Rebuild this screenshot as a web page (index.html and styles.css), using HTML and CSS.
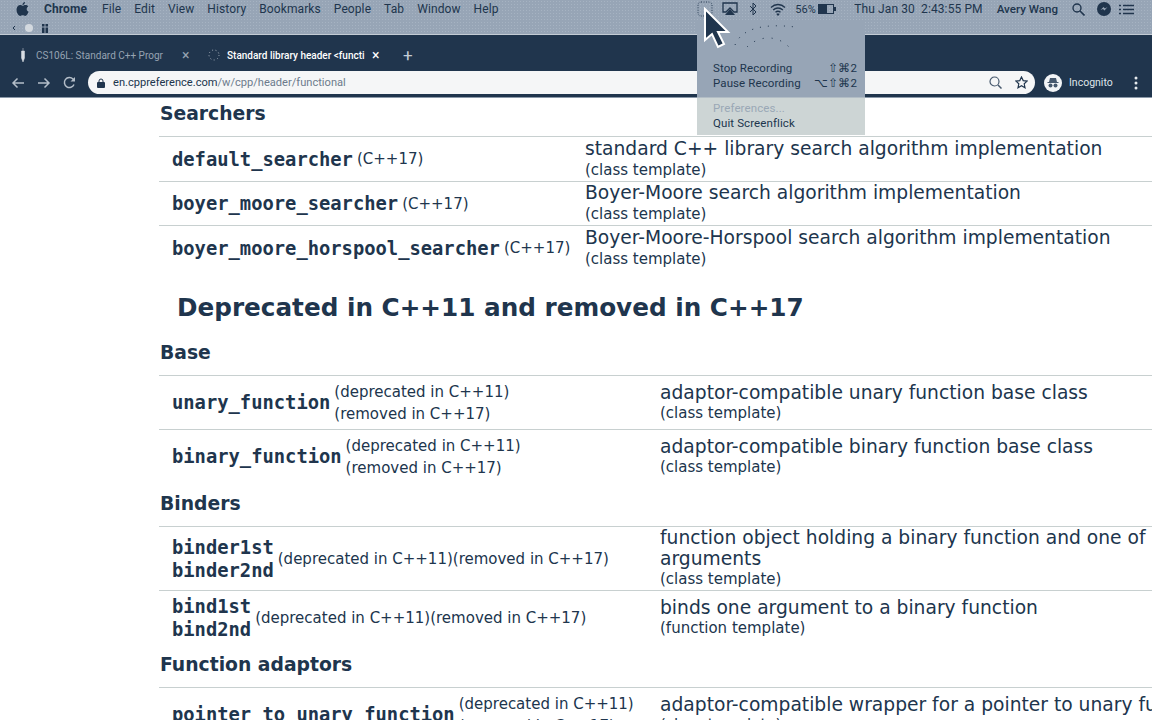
FILE: index.html

```html
<!DOCTYPE html>
<html lang="en">
<head>
    <meta charset="UTF-8" />
    <title>Standard library header &lt;functional&gt;</title>
    <link rel="stylesheet" href="styles.css">
</head>
<body>

<div class="menubar">
  <div class="menu-row">
    <div class="menu-left">
      <svg class="apple" width="13" height="14" viewBox="0 0 13 14"><path d="M9 0c.1 1.400-1 2.900-2.600 2.900C6.300 1.500 7.600.2 9 0zM6.500 3.800c.7 0 1.600-.8 3-.8 1 0 2.100.5 2.700 1.400-2.200 1.400-1.900 4.300.4 5.300-.6 1.600-2 4.200-3.400 4.200-.9 0-1.400-.6-2.500-.6s-1.700.6-2.500.6C2.500 13.900.5 10.600.5 7.800.5 4.800 2.400 3.100 4.200 3.100c1 0 1.700.7 2.300.7z" fill="#20354d"/></svg>
      <span class="app-name">Chrome</span>
      <span>File</span>
      <span>Edit</span>
      <span>View</span>
      <span>History</span>
      <span>Bookmarks</span>
      <span>People</span>
      <span>Tab</span>
      <span>Window</span>
      <span>Help</span>
    </div>
    <div class="menu-right">
      <svg class="status-icon rec" width="16" height="16" viewBox="0 0 16 16"><rect x="1" y="1" width="14" height="14" rx="3" fill="none" stroke="#20354d" stroke-dasharray="1 1.500"/></svg>
      <svg class="status-icon airplay" width="16" height="14" viewBox="0 0 16 14"><path d="M1 1h14v9h-3L8 6l-4 4H1z" fill="none" stroke="#20354d" stroke-width="1.300"/><path d="M8 7l5 6H3z" fill="#20354d"/></svg>
      <svg class="status-icon bt" width="8" height="14" viewBox="0 0 8 14"><path d="M1 4l6 6-3 3V1l3 3-6 6" fill="none" stroke="#20354d"/></svg>
      <svg class="status-icon wifi" width="16" height="13" viewBox="0 0 16 13"><path d="M1 4.500c4-4 10-4 14 0M3.200 7c2.800-2.700 6.800-2.700 9.600 0M5.500 9.300c1.500-1.300 3.500-1.300 5 0" fill="none" stroke="#20354d" stroke-width="1.300"/><path d="M8 13l-1.700-2c1-.6 2.400-.6 3.400 0z" fill="#20354d"/></svg>
      <span class="batt-text">56%</span>
      <svg class="status-icon batt" width="18" height="10" viewBox="0 0 18 10"><rect x=".5" y=".5" width="15" height="9" fill="none" stroke="#20354d"/><rect x="1" y="1" width="8" height="8" fill="#20354d"/><rect x="16" y="3" width="2" height="4" fill="#20354d"/></svg>
      <span class="clock">Thu Jan 30&nbsp; 2:43:55 PM</span>
      <span class="user">Avery Wang</span>
      <svg class="status-icon search" width="13" height="13" viewBox="0 0 13 13"><circle cx="5" cy="5" r="4" fill="none" stroke="#20354d" stroke-width="1.400"/><path d="M8 8l4.500 4.500" stroke="#20354d" stroke-width="1.600"/></svg>
      <svg class="status-icon msg" width="14" height="14" viewBox="0 0 14 14"><circle cx="7" cy="7" r="7" fill="#20354d"/><path d="M3.500 8l3-3 1.500 1.500L10.500 5l-3 3.500L6 7z" fill="#97a5b6"/></svg>
      <svg class="status-icon list" width="15" height="11" viewBox="0 0 15 11"><path d="M4 1.500h11M4 5.500h11M4 9.500h11" stroke="#20354d" stroke-width="1.600"/><path d="M0 1.500h2M0 5.500h2M0 9.500h2" stroke="#20354d" stroke-width="1.600"/></svg>
    </div>
  </div>
  <div class="extras-row">
    <svg width="40" height="12" viewBox="0 0 40 12"><path d="M1 6l2-2M1 6l2 2" stroke="#20354d"/><circle cx="17" cy="6" r="4" fill="#d3d9df"/><rect x="30" y="2" width="6" height="9" fill="#20354d"/><path d="M30 5h6M33 2v9" stroke="#97a5b6"/></svg>
  </div>
</div>

<div class="tabbar">
  <div class="tab">
    <svg width="6" height="14" viewBox="0 0 6 14"><path d="M3 0v3M1.500 3h3v7L3 14l-1.500-4z" fill="#d8dde3" stroke="#d8dde3" stroke-width=".5"/></svg>
    <span class="tab-title">CS106L: Standard C++ Progr</span>
    <span class="tab-close">×</span>
  </div>
  <div class="tab tab-active">
    <svg width="12" height="14" viewBox="0 0 12 14"><circle cx="6" cy="7" r="5" fill="none" stroke="#aab4c0" stroke-dasharray="1 2.500"/></svg>
    <span class="tab-title">Standard library header &lt;functi</span>
    <span class="tab-close">×</span>
  </div>
  <span class="tab-new">+</span>
</div>

<div class="toolbar">
  <svg class="nav-btn" width="14" height="12" viewBox="0 0 14 12"><path d="M13 6H2M6.500 1.500L2 6l4.500 4.500" fill="none" stroke="#b4bec9" stroke-width="1.500"/></svg>
  <svg class="nav-btn" width="14" height="12" viewBox="0 0 14 12"><path d="M1 6h11M7.500 1.500L12 6l-4.500 4.500" fill="none" stroke="#b4bec9" stroke-width="1.500"/></svg>
  <svg class="nav-btn" width="13" height="13" viewBox="0 0 13 13"><path d="M11 8.500A5 5 0 1 1 10 3l1.500 1.500" fill="none" stroke="#b4bec9" stroke-width="1.500"/><path d="M12 1v4.500H7.500z" fill="#b4bec9"/></svg>
  <div class="omnibox">
    <svg width="8" height="10" viewBox="0 0 8 10"><rect y="4" width="8" height="6" rx="1" fill="#20354d"/><path d="M2 4.500V3a2 2 0 0 1 4 0v1.500" fill="none" stroke="#20354d"/></svg>
    <span class="url"><b>en.cppreference.com</b>/w/cpp/header/functional</span>
    <svg class="omni-zoom" width="13" height="13" viewBox="0 0 13 13"><circle cx="5.500" cy="5.500" r="4.500" fill="none" stroke="#46586d" stroke-width="1.200"/><path d="M9 9l3.500 3.500" stroke="#46586d" stroke-width="1.500"/></svg>
    <svg class="omni-star" width="13" height="13" viewBox="0 0 13 13"><path d="M6.500 1l1.700 3.600 3.900.5-2.900 2.700.8 3.900-3.500-2-3.500 2 .8-3.900L.9 5.100l3.900-.5z" fill="none" stroke="#20354d" stroke-width="1.200"/></svg>
  </div>
  <svg class="avatar" width="18" height="18" viewBox="0 0 18 18"><circle cx="9" cy="9" r="9" fill="#f2f4f6"/><path d="M5 8l1-4h6l1 4z" fill="#46586d"/><path d="M3.500 8.500h11" stroke="#46586d"/><circle cx="6.500" cy="11.500" r="2" fill="#46586d"/><circle cx="11.500" cy="11.500" r="2" fill="#46586d"/></svg>
  <span class="profile">Incognito</span>
  <svg class="dots" width="4" height="14" viewBox="0 0 4 14"><circle cx="2" cy="2" r="1.500" fill="#e6eaee"/><circle cx="2" cy="7" r="1.500" fill="#e6eaee"/><circle cx="2" cy="12" r="1.500" fill="#e6eaee"/></svg>
</div>

<div class="content">
  <h3>Searchers</h3>
  <div class="dsc-table table-narrow">
    <div class="dsc-row row-45">
      <div class="dsc-name"><code>default_searcher</code><small>(C++17)</small></div>
      <div class="dsc-text">standard C++ library search algorithm implementation<small>(class template)</small></div>
    </div>
    <div class="dsc-row row-44">
      <div class="dsc-name"><code>boyer_moore_searcher</code><small>(C++17)</small></div>
      <div class="dsc-text">Boyer-Moore search algorithm implementation<small>(class template)</small></div>
    </div>
    <div class="dsc-row row-45">
      <div class="dsc-name"><code>boyer_moore_horspool_searcher</code><small>(C++17)</small></div>
      <div class="dsc-text">Boyer-Moore-Horspool search algorithm implementation<small>(class template)</small></div>
    </div>
  </div>

  <h2>Deprecated in C++11 and removed in C++17</h2>

  <h3>Base</h3>
  <div class="dsc-table">
    <div class="dsc-row row-54">
      <div class="dsc-name"><code>unary_function</code><small class="two-line">(deprecated in C++11)<br>(removed in C++17)</small></div>
      <div class="dsc-text">adaptor-compatible unary function base class<small>(class template)</small></div>
    </div>
    <div class="dsc-row row-54">
      <div class="dsc-name"><code>binary_function</code><small class="two-line">(deprecated in C++11)<br>(removed in C++17)</small></div>
      <div class="dsc-text">adaptor-compatible binary function base class<small>(class template)</small></div>
    </div>
  </div>

  <h3>Binders</h3>
  <div class="dsc-table">
    <div class="dsc-row row-64">
      <div class="dsc-name"><code class="stack">binder1st<br>binder2nd</code><small>(deprecated in C++11)(removed in C++17)</small></div>
      <div class="dsc-text">function object holding a binary function and one of<br>arguments<small>(class template)</small></div>
    </div>
    <div class="dsc-row row-54">
      <div class="dsc-name"><code class="stack">bind1st<br>bind2nd</code><small>(deprecated in C++11)(removed in C++17)</small></div>
      <div class="dsc-text">binds one argument to a binary function<small>(function template)</small></div>
    </div>
  </div>

  <h3>Function adaptors</h3>
  <div class="dsc-table">
    <div class="dsc-row row-54">
      <div class="dsc-name"><code>pointer_to_unary_function</code><small class="two-line">(deprecated in C++11)<br>(removed in C++17)</small></div>
      <div class="dsc-text">adaptor-compatible wrapper for a pointer to unary function<small>(class template)</small></div>
    </div>
  </div>
</div>

<!-- screenflick dropdown, sits over the browser -->
<div class="status-menu">
  <svg class="menu-spinner" width="70" height="28" viewBox="0 0 70 28">
    <path d="M2 22C8 6 30 0 62 4" fill="none" stroke="#20354d" stroke-dasharray="1 7"/>
    <path d="M14 24C24 14 42 10 56 24" fill="none" stroke="#20354d" stroke-dasharray="1 8"/>
  </svg>
  <div class="menu-item"><span>Stop Recording</span><span>⇧⌘2</span></div>
  <div class="menu-item"><span>Pause Recording</span><span>⌥⇧⌘2</span></div>
  <div class="menu-sep"></div>
  <div class="menu-item menu-dim"><span>Preferences...</span></div>
  <div class="menu-item"><span>Quit Screenflick</span></div>
</div>

<svg class="cursor" width="28" height="42" viewBox="0 0 28 42"><path d="M2 2v31l7-6 6 13 6-3-6-12h10z" fill="#20354d" stroke="#fff" stroke-width="2"/></svg>

</body>
</html>
```

FILE: styles.css

```css
html, body {
  margin: 0;
  height: 720px;
  overflow: hidden;
  background: #fff;
}
body {
  color: #20354d;
  font-family: 'DejaVu Sans', sans-serif;
}

/* mac menu bar */
.menubar {
  height: 35px;
  background-color: #97a5b6;
  background-image: radial-gradient(#a6b3c2 0.6px, transparent 0.8px);
  background-size: 3px 3px;
  font-family: Roboto, sans-serif;
  font-size: 12px;
  box-sizing: border-box;
  border-bottom: 1px solid #c4ccd5;
}
.menu-row {
  height: 18px;
  display: flex;
  justify-content: space-between;
  align-items: center;
}
.menu-left {
  display: flex;
  align-items: center;
  gap: 13px;
  padding-left: 16px;
  letter-spacing: 0.1px;
}
.apple {
  margin-right: 2px;
}
.app-name {
  font-weight: 700;
  margin-right: 2px;
}
.menu-right {
  display: flex;
  align-items: center;
  padding-right: 18px;
}
.status-icon {
  flex: none;
}
.airplay { margin-left: 9px; }
.bt { margin-left: 11px; }
.wifi { margin-left: 13px; }
.batt-text { margin-left: 9px; font-size: 11px; width: 23px; }
.clock { margin-left: 18px; letter-spacing: 0.1px; }
.user { margin-left: 14px; font-size: 11.600px; font-weight: 500; }
.search { margin-left: 14px; }
.msg { margin-left: 12px; }
.list { margin-left: 8px; }
.extras-row {
  height: 16px;
  padding: 3px 0 0 12px;
  box-sizing: border-box;
  display: flex;
  align-items: center;
}

/* browser chrome */
.tabbar {
  height: 35px;
  padding-top: 5px;
  box-sizing: border-box;
  background: #20354d;
  display: flex;
  align-items: center;
  font-family: Roboto, sans-serif;
  font-size: 10px;
}
.tab {
  display: flex;
  align-items: center;
  color: #96a3b2;
  width: 208px;
  padding-left: 20px;
  box-sizing: border-box;
}
.tab-title {
  margin-left: 10px;
  width: 146px;
  white-space: nowrap;
}
.tab-close {
  font-size: 14px;
}
.tab-active {
  color: #fff;
  width: 192px;
  padding-left: 0;
}
.tab-active .tab-title {
  margin-left: 7px;
  width: 145px;
  font-weight: 500;
}
.tab-new {
  color: #c3ccd6;
  font-size: 17px;
  margin-left: 3px;
}
.toolbar {
  height: 28px;
  background: #20354d;
  border-bottom: 1px solid #8b99a9;
  box-sizing: border-box;
  display: flex;
  align-items: center;
  padding-left: 11px;
  padding-bottom: 2px;
  gap: 12px;
}
.nav-btn {
  flex: none;
}
.omnibox {
  width: 947px;
  height: 23px;
  background: #f5f6f7;
  border-radius: 12px;
  display: flex;
  align-items: center;
  padding: 0 7px 0 9px;
  box-sizing: border-box;
  flex: none;
}
.url {
  margin-left: 8px;
  font-family: Roboto, sans-serif;
  font-size: 11.100px;
  color: #6c7b8c;
}
.url b {
  font-weight: 400;
  color: #20354d;
}
.omni-zoom { margin-left: auto; }
.omni-star { margin-left: 13px; }
.avatar { flex: none; margin-left: -3px; }
.profile {
  font-family: Roboto, sans-serif;
  font-size: 10.500px;
  color: #dfe4e9;
  margin-left: -5px;
}
.dots { margin-left: 9px; }

/* page content */
.content {
  padding-left: 160px;
}
h3 {
  margin: 0 0 7px;
  padding-top: 1px;
  font-size: 18.750px;
  line-height: 30px;
  font-weight: 700;
}
h2 {
  margin: 20px 0 11px 17px;
  font-size: 24.700px;
  line-height: 36px;
  font-weight: 700;
  white-space: nowrap;
}
.dsc-table {
  margin: 0 0 5px -1px;
  --name-col: 501px;
}
.table-narrow {
  --name-col: 426px;
  margin-bottom: 0;
}
.dsc-row {
  display: grid;
  grid-template-columns: var(--name-col) auto;
  align-items: center;
  border-top: 1px solid #c8d0d0;
  box-sizing: border-box;
  white-space: nowrap;
}
.row-44 { height: 44px; }
.row-45 { height: 45px; }
.row-54 { height: 54px; }
.row-64 { height: 64px; }
.dsc-name {
  display: flex;
  align-items: center;
  padding-left: 13px;
}
code {
  font-family: 'DejaVu Sans Mono', monospace;
  font-size: 18.800px;
  font-weight: 700;
}
.stack {
  line-height: 23px;
}
.dsc-name small {
  margin-left: 4px;
  font-size: 15px;
  line-height: 22px;
}
.dsc-text {
  font-size: 18.700px;
  line-height: 21px;
}
.dsc-text small {
  display: block;
  font-size: 15px;
  line-height: 21px;
}
.table-narrow .dsc-text {
  line-height: 22px;
}

/* status menu */
.status-menu {
  position: absolute;
  left: 697px;
  top: 22px;
  width: 168px;
  height: 113px;
  box-sizing: border-box;
  padding: 39px 8px 0 16px;
  font-family: Roboto, sans-serif;
  font-size: 11.500px;
  letter-spacing: 0.1px;
  line-height: 15px;
  background-color: #cdd5d5;
  background-image: linear-gradient(#97a5b6 0, #97a5b6 75px, #cdd5d5 76px);
}
.menu-spinner {
  position: absolute;
  left: 36px;
  top: 1px;
}
.menu-item {
  display: flex;
  justify-content: space-between;
}
.menu-sep {
  height: 10px;
}
.menu-dim {
  color: #9aa8b6;
}
.cursor {
  position: absolute;
  left: 703px;
  top: 7px;
}
```
